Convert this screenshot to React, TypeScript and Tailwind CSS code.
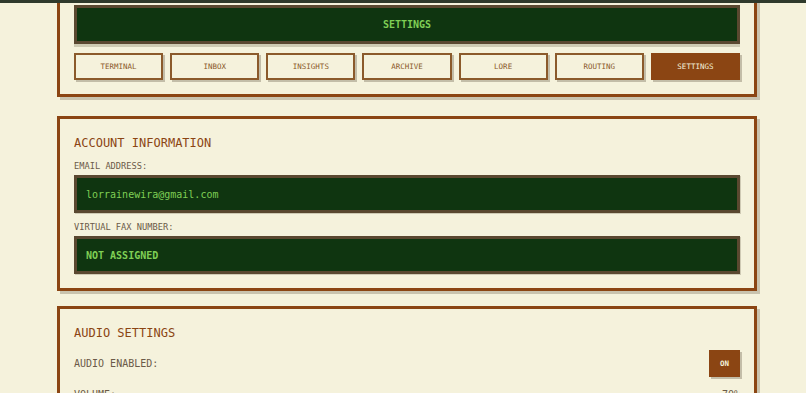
import React from "react";

const mono = { fontFamily: '"DejaVu Sans Mono", "Liberation Mono", monospace' };

const tabs = ["TERMINAL", "INBOX", "INSIGHTS", "ARCHIVE", "LORE", "ROUTING", "SETTINGS"];

function Card({ children, className = "" }: { children: React.ReactNode; className?: string }) {
  return (
    <div
      className={
        "w-[700px] border-[3px] border-[#8b4513] bg-[#f5f2dc] px-[14px] pb-[14px] shadow-[3px_3px_0_rgba(120,110,90,0.35)] " +
        className
      }
    >
      {children}
    </div>
  );
}

function Field({ children, bold = false }: { children: React.ReactNode; bold?: boolean }) {
  return (
    <div
      className={
        "h-[38px] flex items-center border-[3px] border-[#5a4830] bg-[#0f3510] px-[9px] text-[10px] text-[#7fcf55] shadow-[1px_1px_0_rgba(120,110,90,0.3)] " +
        (bold ? "font-bold" : "")
      }
    >
      {children}
    </div>
  );
}

export default function App() {
  return (
    <div className="min-h-[393px] w-full overflow-hidden bg-[#f5f2dc]" style={mono}>
      <div className="fixed left-0 top-0 z-10 h-[3px] w-full bg-[#2f3a2c]" />
      <div className="ml-[57px] flex flex-col">
        <Card className="mt-[-12px] pt-[14px]">
          <div className="flex h-[39px] items-center justify-center border-[3px] border-[#5a4830] bg-[#0f3510] text-[10px] font-bold text-[#7fcf55] shadow-[0_3px_0_rgba(190,185,160,0.7)]">
            SETTINGS
          </div>
          <div className="mt-[9px] grid grid-cols-7 gap-[7px]">
            {tabs.map((t) => {
              const active = t === "SETTINGS";
              return (
                <div
                  key={t}
                  className={
                    "flex h-[27px] items-center justify-center border-2 text-[7.5px] shadow-[2px_2px_0_rgba(120,110,90,0.4)] " +
                    (active
                      ? "border-[#8b4513] bg-[#8b4513] text-[#f5f2dc]"
                      : "border-[#8b5a2b] bg-[#f5f2dc] text-[#8b5a2b]")
                  }
                >
                  {t}
                </div>
              );
            })}
          </div>
        </Card>

        <Card className="mt-[19px] pt-[15px]">
          <div className="text-[12px] leading-[18px] text-[#8b4513]">ACCOUNT INFORMATION</div>
          <div className="mt-[8px] text-[8.7px] leading-[12px] text-[#6b5a48]">EMAIL ADDRESS:</div>
          <div className="mt-[3px]">
            <Field>lorrainewira@gmail.com</Field>
          </div>
          <div className="mt-[8px] text-[8.7px] leading-[12px] text-[#6b5a48]">VIRTUAL FAX NUMBER:</div>
          <div className="mt-[3px]">
            <Field bold>NOT ASSIGNED</Field>
          </div>
        </Card>

        <Card className="mt-[15px] pt-[15px]">
          <div className="text-[12px] leading-[18px] text-[#8b4513]">AUDIO SETTINGS</div>
          <div className="mt-[8px] flex items-center justify-between">
            <span className="text-[10px] text-[#6b5a48]">AUDIO ENABLED:</span>
            <div className="flex h-[27px] w-[31px] items-center justify-center bg-[#8b4513] text-[7.5px] font-bold text-[#f5f2dc] shadow-[2px_2px_0_rgba(120,110,90,0.4)]">
              ON
            </div>
          </div>
          <div className="mt-[10px] flex items-center justify-between">
            <span className="text-[10px] text-[#6b5a48]">VOLUME:</span>
            <span className="text-[10px] text-[#6b5a48]">70%</span>
          </div>
          <div className="h-[40px]" />
        </Card>
      </div>
    </div>
  );
}
